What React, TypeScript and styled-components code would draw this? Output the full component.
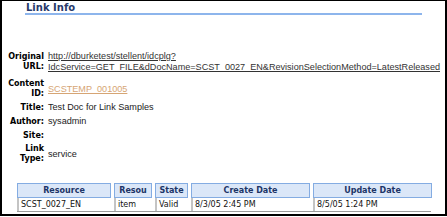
import styled, { createGlobalStyle } from "styled-components";

const GlobalStyle = createGlobalStyle`
  html, body {
    margin: 0;
    padding: 0;
    background: #ffffff;
  }
  * {
    box-sizing: border-box;
  }
`;

interface Field {
  label: string[];
  value?: string;
  lines?: string[];
  kind?: "link" | "content";
}

const fields: Field[] = [
  {
    label: ["Original", "URL:"],
    kind: "link",
    lines: [
      "http://dburketest/stellent/idcplg?",
      "IdcService=GET_FILE&dDocName=SCST_0027_EN&RevisionSelectionMethod=LatestReleased",
    ],
  },
  { label: ["Content", "ID:"], kind: "content", value: "SCSTEMP_001005" },
  { label: ["Title:"], value: "Test Doc for Link Samples" },
  { label: ["Author:"], value: "sysadmin" },
  { label: ["Site:"], value: "" },
  { label: ["Link", "Type:"], value: "service" },
];

const columns = ["Resource", "Resou", "State", "Create Date", "Update Date"];
const row = ["SCST_0027_EN", "item", "Valid", "8/3/05 2:45 PM", "8/5/05 1:24 PM"];

const App = () => {
  return (
    <>
      <GlobalStyle />
      <Frame>
        <Heading>Link Info</Heading>
        <Details>
          {fields.map((f) => (
            <FieldRow key={f.label.join(" ")} $tall={f.kind === "link"}>
              <Label>
                {f.label.map((l) => (
                  <span key={l}>{l}</span>
                ))}
              </Label>
              <Value>
                {f.kind === "link" && f.lines ? (
                  <UrlLink href="#">
                    {f.lines.map((l) => (
                      <span key={l}>{l}</span>
                    ))}
                  </UrlLink>
                ) : f.kind === "content" ? (
                  <ContentLink href="#">{f.value}</ContentLink>
                ) : (
                  f.value
                )}
              </Value>
            </FieldRow>
          ))}
        </Details>
        <Table>
          {columns.map((c) => (
            <HeadCell key={c}>{c}</HeadCell>
          ))}
          {row.map((c) => (
            <DataCell key={c}>{c}</DataCell>
          ))}
        </Table>
      </Frame>
    </>
  );
};

const Frame = styled.div`
  width: 447px;
  height: 216px;
  border: 2px solid #000;
  border-top-width: 1px;
  background: #fff;
  overflow: hidden;
`;

const Heading = styled.div`
  margin: 1px 0 0 23px;
  width: 397px;
  font-family: "DejaVu Sans", Verdana, sans-serif;
  font-weight: bold;
  font-size: 10px;
  line-height: 11px;
  color: #27396a;
  padding-left: 1px;
  border-bottom: 2px solid #8db5ec;
`;

const Details = styled.div`
  margin-top: 36px;
  display: flex;
  flex-direction: column;
  gap: 3px;
`;

const FieldRow = styled.div<{ $tall?: boolean }>`
  display: grid;
  grid-template-columns: 42px 1fr;
  column-gap: 4px;
  align-items: center;
  min-height: 11px;
  padding-bottom: ${(p) => (p.$tall ? "3px" : "0")};
`;

const Label = styled.div`
  display: flex;
  flex-direction: column;
  align-items: flex-end;
  font-family: "DejaVu Sans", Verdana, sans-serif;
  font-weight: bold;
  font-size: 8px;
  line-height: 10px;
  color: #000;
  white-space: nowrap;
`;

const Value = styled.div`
  font-family: "Liberation Sans", Arial, sans-serif;
  font-size: 9.1px;
  line-height: 11px;
  color: #222;
  white-space: nowrap;
`;

const UrlLink = styled.a`
  display: flex;
  flex-direction: column;
  color: #333;
  text-decoration: underline;
`;

const ContentLink = styled.a`
  color: #d6a574;
  text-decoration: underline;
`;

const Table = styled.div`
  margin: 19px 0 0 15px;
  display: grid;
  grid-template-columns: 94px 38px 33px 119px 119px;
  column-gap: 3px;
  width: 414px;
  border-bottom: 1px solid #9a9a9a;
`;

const HeadCell = styled.div`
  height: 15px;
  border: 1px solid #84ace2;
  background: #dbe7f8;
  font-family: "DejaVu Sans", Verdana, sans-serif;
  font-weight: bold;
  font-size: 8px;
  line-height: 13px;
  color: #1d3567;
  text-align: center;
  overflow: hidden;
  white-space: nowrap;
`;

const DataCell = styled.div`
  height: 13px;
  border-left: 2px solid #c4c4c4;
  padding-left: 2px;
  font-family: "DejaVu Sans", Verdana, sans-serif;
  font-size: 8px;
  line-height: 13px;
  color: #111;
  white-space: nowrap;
  overflow: hidden;
`;

export default App;
